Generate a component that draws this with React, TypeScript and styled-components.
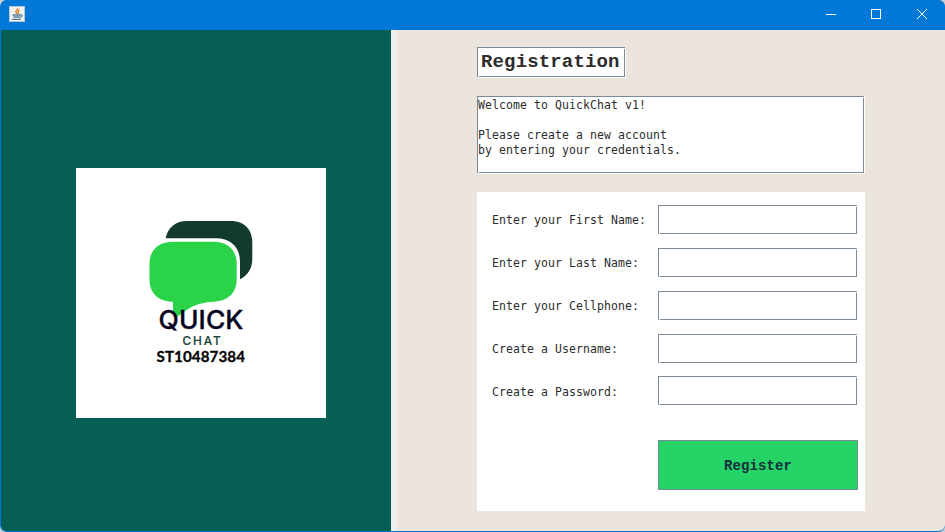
import React from "react";
import styled, { createGlobalStyle } from "styled-components";

const GlobalStyle = createGlobalStyle`
  * { box-sizing: border-box; }
  body { margin: 0; background: #c9ccd0; overflow: hidden; }
`;

const steel = "#7a8a99";
const ink = "#2d2d2d";

const Window = styled.main`
  width: 945px;
  height: 532px;
  display: flex;
  flex-direction: column;
  overflow: hidden;
  border: 1px solid #0078d7;
  border-top: 0;
  border-right: 0;
  border-radius: 7px;
  background: #0078d7;
  font-family: "DejaVu Sans Mono", monospace;
  font-size: 11.5px;
  letter-spacing: 0.077px;
  color: ${ink};
`;

const TitleBar = styled.header`
  height: 30px;
  flex: none;
  display: flex;
  align-items: center;
  justify-content: space-between;
  padding: 0 0 2px 8px;
  background: #0078d7;
`;

const Controls = styled.div`
  display: flex;
`;

const ControlButton = styled.button`
  width: 46px;
  height: 28px;
  padding: 0;
  border: 0;
  display: flex;
  align-items: center;
  justify-content: center;
  background: transparent;
`;

const Content = styled.div`
  flex: 1;
  display: flex;
  min-height: 0;
`;

const BrandPane = styled.aside`
  width: 390px;
  display: flex;
  justify-content: center;
  align-items: flex-start;
  padding: 138px 0 0 10px;
  background: #075e54;
`;

const LogoCard = styled.div`
  width: 250px;
  height: 250px;
  background: #fff;
`;

const Divider = styled.div`
  width: 6px;
  background: #eeeeee;
`;

const FormPane = styled.section`
  flex: 1;
  display: flex;
  flex-direction: column;
  align-items: flex-start;
  padding: 17px 0 0 80px;
  background: #ece5dd;
`;

const Etched = styled.div`
  position: relative;
  border: 1px solid ${steel};
  background: #fff;
  box-shadow: 1px 1px 0 #fff;

  &::before,
  &::after {
    content: "";
    position: absolute;
    width: 1px;
    height: 1px;
    background: #fff;
  }
  &::before { top: 0; right: -1px; }
  &::after { bottom: -1px; left: 0; }
`;

const Heading = styled(Etched).attrs({ as: "h1" })`
  width: 148px;
  height: 30px;
  margin: 0;
  padding-left: 3px;
  font-family: "Liberation Mono", monospace;
  font-size: 19px;
  line-height: 29px;
  letter-spacing: 0.15px;
  font-weight: 700;
  white-space: nowrap;
`;

const Welcome = styled(Etched)`
  width: 387px;
  height: 77px;
  margin-top: 19px;
  padding-top: 1px;
  line-height: 15px;
  white-space: pre;
`;

const FormCard = styled.form`
  width: 388px;
  height: 319px;
  margin-top: 19px;
  padding: 13px 7px 0 15px;
  display: flex;
  flex-direction: column;
  background: #fff;
`;

const Row = styled.label<{ $last?: boolean }>`
  display: grid;
  grid-template-columns: 166px 199px;
  align-items: center;
  height: ${(p) => (p.$last ? 29 : 43)}px;
  padding-bottom: ${(p) => (p.$last ? 0 : 14)}px;
  margin-top: ${(p) => (p.$last ? -1 : 0)}px;
`;

const Caption = styled.span<{ $last?: boolean }>`
  line-height: 15px;
  padding-top: ${(p) => (p.$last ? 3 : 1)}px;
`;

const FieldFrame = styled(Etched)`
  height: 29px;
`;

const Field = styled.input`
  display: block;
  width: 100%;
  height: 100%;
  padding: 0 2px;
  border: 0;
  outline: 0;
  background: transparent;
  font: inherit;
`;

const RegisterButton = styled.button`
  width: 200px;
  height: 50px;
  margin-top: 35px;
  align-self: flex-end;
  padding: 2px 0 0;
  border: 1px solid ${steel};
  background: #25d366;
  color: #14303d;
  font: 700 14px "Liberation Mono", monospace;
  letter-spacing: 0.1px;
`;

const JavaIcon = () => (
  <svg width="16" height="16" viewBox="0 0 16 16">
    <rect x="0.5" y="0.5" width="15" height="15" fill="#eef0f1" stroke="#b9c4cc" />
    <path d="M8.900 2c.7 1.900-3 2.500-2 4.200.4.700 1 1 1 1.800M10.600 4.200c-1.800.8-1.900 1.400-1.300 2.100.4.600.2 1-.3 1.500" fill="none" stroke="#e0802f" strokeWidth="1.400" />
    <path d="M3.500 9h7.500M4.500 11h6M3 13.300h9M11 9c2.900-.8 2.700 2-.5 2.300" fill="none" stroke="#5c7f99" strokeWidth="1.300" />
  </svg>
);

const Logo = () => (
  <svg width="250" height="250" viewBox="76 168 250 250">
    <path d="M165.700 238.200C168 227 176 221 187 221H231C244 221 252.300 229.500 252.300 242V259C252.300 268 248 275.500 240 279.300V262C240 247 231 238.200 216 238.200Z" fill="#123a2f" />
    <path d="M173 241.800H213.500C228 241.800 236.700 250 236.700 264V279C236.700 294 227 301.500 212 301.800C196 303 188 308.500 177 317L173 315V301.800C158 301.500 149.500 293 149.500 279V264C149.500 250 158.500 241.800 173 241.800Z" fill="#2ad348" />
    <text x="158.600" y="329" fontFamily="Inter, sans-serif" fontSize="25" fontWeight="500" fill="#07051f" stroke="#07051f" strokeWidth="0.350" textLength="85" lengthAdjust="spacingAndGlyphs">QUICK</text>
    <text x="182.400" y="344.500" fontFamily="Inter, sans-serif" fontSize="11.800" fontWeight="500" fill="#1d4439" stroke="#1d4439" strokeWidth="0.200" textLength="38.500" lengthAdjust="spacing">CHAT</text>
    <text x="156.500" y="362.300" fontFamily="Lato, sans-serif" fontSize="14.700" fontWeight="700" fill="#050505" stroke="#050505" strokeWidth="0.300" textLength="88.500" lengthAdjust="spacingAndGlyphs">ST10487384</text>
  </svg>
);

const fields = [
  { label: "Enter your First Name:", type: "text" },
  { label: "Enter your Last Name:", type: "text" },
  { label: "Enter your Cellphone:", type: "text" },
  { label: "Create a Username:", type: "text" },
  { label: "Create a Password:", type: "password" },
];

const welcomeText = `Welcome to QuickChat v1!

Please create a new account
by entering your credentials.`;

export default function App() {
  return (
    <>
      <GlobalStyle />
      <Window>
        <TitleBar>
          <JavaIcon />
          <Controls>
            <ControlButton type="button" aria-label="Minimize">
              <svg width="12" height="10"><path d="M2 5.500H12" stroke="#fff" /></svg>
            </ControlButton>
            <ControlButton type="button" aria-label="Maximize">
              <svg width="10" height="10"><rect x="0.500" y="0.500" width="9" height="9" fill="none" stroke="#fff" /></svg>
            </ControlButton>
            <ControlButton type="button" aria-label="Close">
              <svg width="10" height="10"><path d="M0 0L10 10M10 0L0 10" stroke="#fff" /></svg>
            </ControlButton>
          </Controls>
        </TitleBar>
        <Content>
          <BrandPane>
            <LogoCard><Logo /></LogoCard>
          </BrandPane>
          <Divider />
          <FormPane>
            <Heading>Registration</Heading>
            <Welcome>{welcomeText}</Welcome>
            <FormCard onSubmit={(e) => e.preventDefault()}>
              {fields.map((f, i) => (
                <Row key={f.label} $last={i === fields.length - 1}>
                  <Caption $last={i === fields.length - 1}>{f.label}</Caption>
                  <FieldFrame><Field type={f.type} /></FieldFrame>
                </Row>
              ))}
              <RegisterButton type="submit">Register</RegisterButton>
            </FormCard>
          </FormPane>
        </Content>
      </Window>
    </>
  );
}
